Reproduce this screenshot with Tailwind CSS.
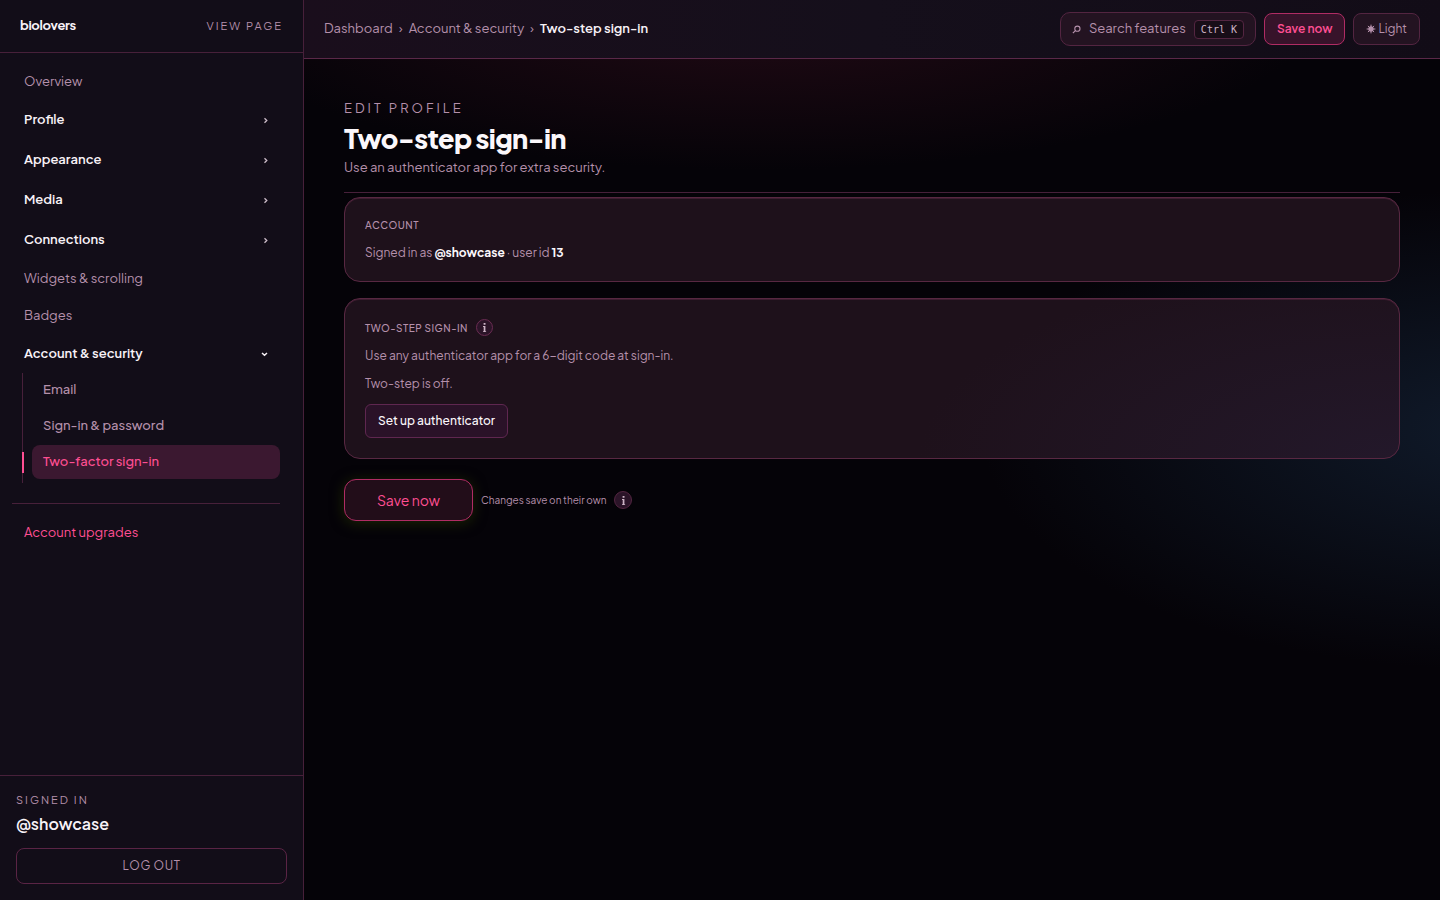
<!DOCTYPE html>
<html lang="en">
<head>
  <meta charset="UTF-8" />
  <meta name="viewport" content="width=device-width, initial-scale=1.0"/>
  <title>Two-step sign-in - biolovers</title>
  <script src="https://cdn.jsdelivr.net/npm/@tailwindcss/browser@4"></script>
</head>
<body class="min-h-screen flex bg-[#050308] bg-[radial-gradient(ellipse_560px_160px_at_760px_10px,#220a15_0%,transparent_100%),radial-gradient(ellipse_520px_240px_at_1500px_430px,#101a2a_0%,transparent_100%)] bg-no-repeat font-['Plus_Jakarta_Sans','Inter',sans-serif] text-[13px] text-[#b590ab]">

  <!-- SIDEBAR -->
  <aside class="w-[304px] shrink-0 h-screen sticky top-0 flex flex-col border-r border-[#47203a] bg-[#120d18]">
    <div class="h-[53px] shrink-0 flex items-center justify-between px-5 border-b border-[#47203a]">
      <a href="#" class="font-bold tracking-tight text-[#f8f2f7]">biolovers</a>
      <a href="#" class="text-[11px] tracking-[2px]">VIEW PAGE</a>
    </div>

    <nav class="flex-1 overflow-hidden pt-[11px] pl-3 pr-[23px] flex flex-col gap-[2px]">
      <a href="#" class="h-[35px] flex items-center px-3">Overview</a>
      <button class="h-[38px] flex items-center justify-between px-3 font-semibold text-[#f8f2f7]">Profile
        <svg class="w-[5px] h-[7px] text-[#cdbcc9]" viewBox="0 0 5 7" fill="none" stroke="currentColor" stroke-width="1.3"><path d="M1.5 1.2l2.3 2.3L1.5 5.8"/></svg>
      </button>
      <button class="h-[38px] flex items-center justify-between px-3 font-semibold text-[#f8f2f7]">Appearance
        <svg class="w-[5px] h-[7px] text-[#cdbcc9]" viewBox="0 0 5 7" fill="none" stroke="currentColor" stroke-width="1.3"><path d="M1.5 1.2l2.3 2.3L1.5 5.8"/></svg>
      </button>
      <button class="h-[38px] flex items-center justify-between px-3 font-semibold text-[#f8f2f7]">Media
        <svg class="w-[5px] h-[7px] text-[#cdbcc9]" viewBox="0 0 5 7" fill="none" stroke="currentColor" stroke-width="1.3"><path d="M1.5 1.2l2.3 2.3L1.5 5.8"/></svg>
      </button>
      <button class="h-[38px] flex items-center justify-between px-3 font-semibold text-[#f8f2f7]">Connections
        <svg class="w-[5px] h-[7px] text-[#cdbcc9]" viewBox="0 0 5 7" fill="none" stroke="currentColor" stroke-width="1.3"><path d="M1.5 1.2l2.3 2.3L1.5 5.8"/></svg>
      </button>
      <a href="#" class="h-[35px] flex items-center px-3">Widgets &amp; scrolling</a>
      <a href="#" class="h-[35px] flex items-center px-3">Badges</a>
      <div>
        <button class="w-full h-[38px] flex items-center justify-between px-3 font-semibold text-[#f8f2f7]">Account &amp; security
          <svg class="w-[7px] h-[5px]" viewBox="0 0 7 5" fill="none" stroke="currentColor" stroke-width="1.5"><path d="M1 1l2.5 2.3L6 1"/></svg>
        </button>
        <div class="ml-[10px] pl-[9px] pb-1 border-l border-[#47203a] flex flex-col gap-[2px]">
          <a href="#" class="h-[34px] flex items-center px-[11px] font-medium">Email</a>
          <a href="#" class="h-[34px] flex items-center px-[11px] font-medium">Sign-in &amp; password</a>
          <a href="#" aria-current="page" class="relative h-[34px] flex items-center px-[11px] rounded-lg bg-[#3b1830] font-medium text-[#ff4f93]">
            <span class="absolute -left-[10px] top-[7px] w-[2px] h-[21px] bg-[#ff4f93]"></span>
            Two-factor sign-in
          </a>
        </div>
      </div>
      <div class="mt-[18px] pt-[11px] border-t border-[#47203a]">
        <a href="#" class="h-[35px] flex items-center px-3 text-[#ff4f93]">Account upgrades</a>
      </div>
    </nav>

    <div class="shrink-0 border-t border-[#47203a] p-4">
      <p class="text-[11px] leading-4 tracking-[2px]">SIGNED IN</p>
      <p class="text-base leading-6 mt-1 font-semibold text-[#f8f2f7]">@showcase</p>
      <button class="mt-3 w-full h-9 rounded-lg border border-[#5a2445] text-xs tracking-wider">LOG OUT</button>
    </div>
  </aside>

  <div class="flex-1 min-w-0">
    <!-- TOP BAR -->
    <header class="h-[59px] flex items-center justify-between px-5 border-b border-[#5a2848] bg-linear-to-r from-[#1a0e1c] via-[#150f1b] to-[#120c17]">
      <nav class="flex items-center gap-[6px]">
        <a href="#">Dashboard</a>
        <span>›</span>
        <a href="#">Account &amp; security</a>
        <span>›</span>
        <span class="font-semibold text-[#f8f2f7]">Two-step sign-in</span>
      </nav>
      <div class="flex items-center gap-2">
        <button class="h-[34px] flex items-center gap-2 px-[11px] rounded-[10px] border border-[#532541] bg-[#231321]">
          <svg class="w-[9px] h-[9px]" viewBox="0 0 9 9" fill="none" stroke="currentColor" stroke-width="1.1"><circle cx="5.4" cy="3.7" r="2.6"/><path d="M3.5 5.6L.9 8"/></svg>
          Search features
          <kbd class="h-[19px] flex items-center px-[6px] rounded-sm border border-[#532541] bg-[#180d17] font-['DejaVu_Sans_Mono',monospace] text-[10px] text-[#cdb4c6]">Ctrl K</kbd>
        </button>
        <button class="h-8 px-3 rounded-lg border border-[#b02c64] bg-[#37132a] text-xs font-semibold text-[#ff4f93]">Save now</button>
        <button class="h-8 flex items-center gap-[2px] px-3 rounded-lg border border-[#532541] bg-[#231321] text-xs">
          <svg class="w-[10px] h-[10px]" viewBox="0 0 11 11" stroke="currentColor" stroke-width="1.1"><circle cx="5.5" cy="5.5" r="2.9" fill="currentColor" stroke="none"/><path d="M5.5 .7v9.6M.7 5.5h9.6M2.1 2.1l6.8 6.8M8.9 2.1L2.1 8.9"/></svg>
          Light
        </button>
      </div>
    </header>

    <!-- CONTENT -->
    <main class="px-10 pt-10">
      <div class="border-b border-[#47203a] pb-[15px]">
        <p class="text-[13px] leading-[18px] tracking-[3px]">EDIT PROFILE</p>
        <h1 class="text-[27px] leading-[34px] mt-1 mb-[2px] font-extrabold tracking-tight text-[#fbf7fb]">Two-step sign-in</h1>
        <p class="leading-5">Use an authenticator app for extra security.</p>
      </div>

      <section class="mt-1 rounded-2xl border border-[#582842] bg-[#1e111b] shadow-[inset_0_1px_0_#3d1d30] p-5 pt-[19px] pb-[18px] text-xs">
        <h2 class="text-[10px] leading-4 font-medium tracking-wider">ACCOUNT</h2>
        <p class="mt-[10px] leading-5">Signed in as <strong class="text-[#fbf7fb]">@showcase</strong> · user id <strong class="text-[#fbf7fb]">13</strong></p>
      </section>

      <section class="mt-4 rounded-2xl border border-[#582842] bg-[#1e111b] bg-[radial-gradient(ellipse_480px_200px_at_100%_100%,#23182a_0%,transparent_100%)] shadow-[inset_0_1px_0_#3d1d30] p-5 text-xs">
        <div class="flex items-center gap-2">
          <h2 class="text-[10px] leading-4 font-medium tracking-wider">TWO-STEP SIGN-IN</h2>
          <button aria-label="About two-step sign-in" class="w-[17px] h-[17px] flex items-center justify-center rounded-full border border-[#6a2c52] bg-[#2b1428] text-[#cdb4c6]">
            <svg class="w-[5px] h-[9px]" viewBox="0 0 5 9" fill="currentColor"><path d="M1.6 0h1.9v1.7H1.6zM1.7 3h1.7v6H1.7zM1 3h1v1H1zM1 8.2h3.1V9H1z"/></svg>
          </button>
        </div>
        <p class="mt-[10px] leading-5">Use any authenticator app for a 6-digit code at sign-in.</p>
        <p class="mt-2 leading-5">Two-step is off.</p>
        <button class="mt-[10px] h-[34px] px-3 rounded-md border border-[#5f2750] bg-[#2a1228] font-medium text-[#fbf7fb]">Set up authenticator</button>
      </section>

      <div class="mt-5 flex items-center gap-2">
        <button class="h-[42px] px-8 rounded-xl border border-[#b02c64] bg-[#220d19] shadow-[0_2px_14px_#1c2404] text-sm text-[#ff4f93]">Save now</button>
        <span class="text-[10px]">Changes save on their own</span>
        <button aria-label="About saving" class="w-[18px] h-[18px] flex items-center justify-center rounded-full border border-[#532541] bg-[#2b1428] text-[#cdb4c6]">
          <svg class="w-[5px] h-[9px]" viewBox="0 0 5 9" fill="currentColor"><path d="M1.6 0h1.9v1.7H1.6zM1.7 3h1.7v6H1.7zM1 3h1v1H1zM1 8.2h3.1V9H1z"/></svg>
        </button>
      </div>
    </main>
  </div>
</body>
</html>
